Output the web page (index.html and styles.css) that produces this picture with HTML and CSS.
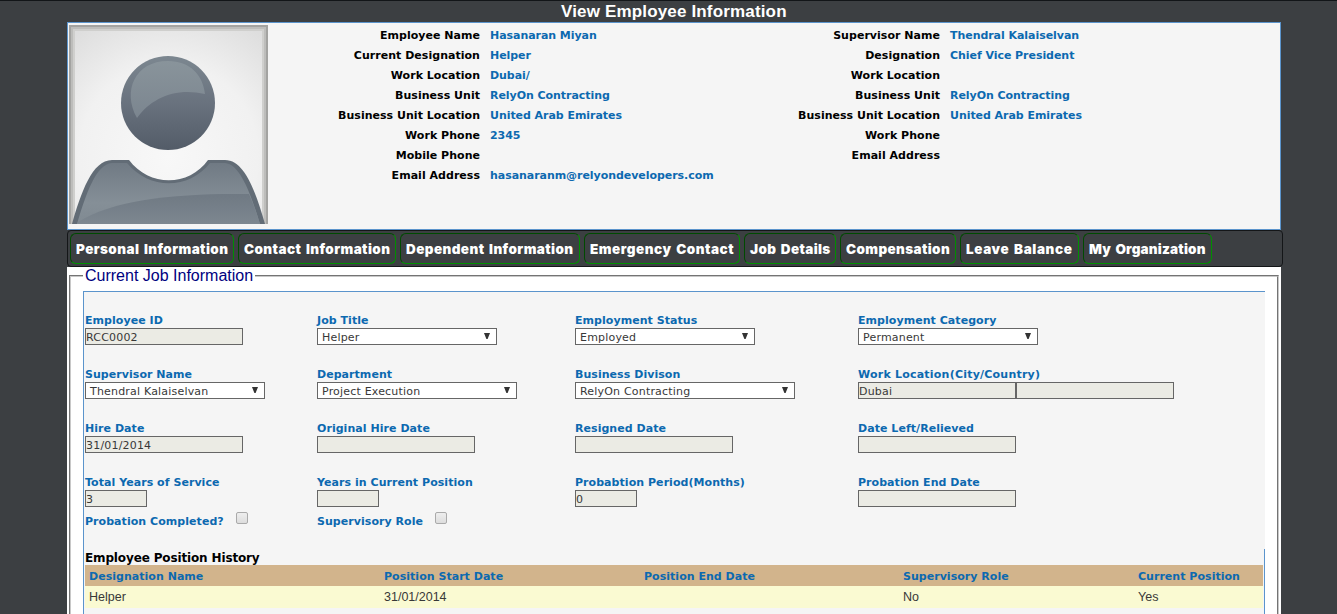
FILE: index.html
```html
<!DOCTYPE html>
<html lang="en">
<head>
<meta charset="utf-8">
<title>View Employee Information</title>
<link rel="stylesheet" href="styles.css">
</head>
<body>
<div class="page">
  <h1 class="title"><span>View Employee Information</span></h1>
  <section class="summary">
    <svg class="avatar" viewBox="0 0 199 199" width="199" height="199">
      <defs>
        <radialGradient id="bg" cx=".5" cy=".65" r=".8"><stop offset="0" stop-color="#f8f8f8"/><stop offset=".6" stop-color="#f1f1f1"/><stop offset="1" stop-color="#dedede"/></radialGradient>
        <linearGradient id="head" x1="0" y1="0" x2="0" y2="1"><stop offset="0" stop-color="#7c8790"/><stop offset=".5" stop-color="#69727e"/><stop offset="1" stop-color="#535c68"/></linearGradient>
        <linearGradient id="shine" x1="0" y1="0" x2="0" y2="1"><stop offset="0" stop-color="#89949b"/><stop offset="1" stop-color="#7b858f"/></linearGradient>
        <linearGradient id="body" x1="0" y1="0" x2="0" y2="1"><stop offset="0" stop-color="#707a84"/><stop offset=".65" stop-color="#858f97"/><stop offset="1" stop-color="#808a92"/></linearGradient>
        <linearGradient id="fold" x1="0" y1="0" x2="0" y2="1"><stop offset="0" stop-color="#6f7983"/><stop offset="1" stop-color="#7d8790"/></linearGradient>
      </defs>
      <rect width="199" height="199" fill="#a3a3a1"/>
      <rect x="2" y="2" width="195" height="197" fill="#bdbdbb"/>
      <rect x="4" y="4" width="191" height="195" fill="#cfcfcd"/>
      <rect x="6" y="6" width="187" height="193" fill="url(#bg)"/>
      <circle cx="99" cy="78" r="47" fill="url(#head)"/>
      <path d="M68 93C53 66 66 36 99 36C121 36 134 50 136 69C107 62 82 73 68 93Z" fill="url(#shine)"/>
      <path d="M3 199C12 168 23 135 43 135H60C80 162 120 162 139 135H156C176 135 187 168 196 199Z" fill="#626c76"/>
      <path d="M8 199C17 169 27 139 43 138H58C80 165 120 165 141 138H156C171 139 182 169 191 199Z" fill="url(#body)"/>
      <path d="M9 197C45 174 110 168 180 169C184 178 188 189 191 199H8Z" fill="url(#fold)"/>
    </svg>
    <dl class="facts employee">
      <dt>Employee Name</dt><dd>Hasanaran Miyan</dd>
      <dt>Current Designation</dt><dd>Helper</dd>
      <dt>Work Location</dt><dd>Dubai/</dd>
      <dt>Business Unit</dt><dd>RelyOn Contracting</dd>
      <dt>Business Unit Location</dt><dd>United Arab Emirates</dd>
      <dt>Work Phone</dt><dd>2345</dd>
      <dt>Mobile Phone</dt><dd></dd>
      <dt>Email Address</dt><dd>hasanaranm@relyondevelopers.com</dd>
    </dl>
    <dl class="facts">
      <dt>Supervisor Name</dt><dd>Thendral Kalaiselvan</dd>
      <dt>Designation</dt><dd>Chief Vice President</dd>
      <dt>Work Location</dt><dd></dd>
      <dt>Business Unit</dt><dd>RelyOn Contracting</dd>
      <dt>Business Unit Location</dt><dd>United Arab Emirates</dd>
      <dt>Work Phone</dt><dd></dd>
      <dt>Email Address</dt><dd></dd>
    </dl>
  </section>
  <nav class="tabs">
    <a>Personal Information</a><a>Contact Information</a><a>Dependent Information</a><a>Emergency Contact</a><a>Job Details</a><a>Compensation</a><a>Leave Balance</a><a>My Organization</a>
  </nav>
  <main class="content">
    <fieldset class="job">
      <legend>Current Job Information</legend>
      <div class="panel">
        <div class="form">
          <div class="field"><label>Employee ID</label><div class="input">RCC0002</div></div>
          <div class="field"><label>Job Title</label><div class="select">Helper<i class="arrow"></i></div></div>
          <div class="field"><label>Employment Status</label><div class="select">Employed<i class="arrow"></i></div></div>
          <div class="field"><label>Employment Category</label><div class="select">Permanent<i class="arrow"></i></div></div>

          <div class="field"><label>Supervisor Name</label><div class="select">Thendral Kalaiselvan<i class="arrow"></i></div></div>
          <div class="field"><label>Department</label><div class="select medium">Project Execution<i class="arrow"></i></div></div>
          <div class="field"><label>Business Divison</label><div class="select wide">RelyOn Contracting<i class="arrow"></i></div></div>
          <div class="field"><label class="spaced">Work Location(City/Country)</label><div class="pair"><div class="input">Dubai</div><div class="input"></div></div></div>

          <div class="field"><label>Hire Date</label><div class="input">31/01/2014</div></div>
          <div class="field"><label>Original Hire Date</label><div class="input"></div></div>
          <div class="field"><label>Resigned Date</label><div class="input"></div></div>
          <div class="field"><label>Date Left/Relieved</label><div class="input"></div></div>

          <div class="field"><label>Total Years of Service</label><div class="input short">3</div></div>
          <div class="field"><label>Years in Current Position</label><div class="input short"></div></div>
          <div class="field"><label>Probabtion Period(Months)</label><div class="input short">0</div></div>
          <div class="field"><label>Probation End Date</label><div class="input"></div></div>
        </div>
        <div class="checks">
          <div class="check"><label>Probation Completed?</label><i class="box"></i></div>
          <div class="check"><label>Supervisory Role</label><i class="box"></i></div>
        </div>
        <div class="history">
          <h2>Employee Position History</h2>
          <div class="row head"><span>Designation Name</span><span>Position Start Date</span><span>Position End Date</span><span>Supervisory Role</span><span>Current Position</span></div>
          <div class="row"><span>Helper</span><span>31/01/2014</span><span></span><span>No</span><span>Yes</span></div>
        </div>
      </div>
    </fieldset>
  </main>
</div>
</body>
</html>
```
FILE: styles.css
```css
* { box-sizing: border-box; }
body { margin: 0; height: 614px; overflow: hidden; background: #3c3f42; border-top: 1px solid #121518; font: bold 11px/15px "DejaVu Sans", sans-serif; color: #000; }
.page { display: flex; flex-direction: column; width: 1214px; height: 613px; margin-left: 67px; }
.title { flex: none; margin: 0; height: 21px; padding-left: 494px; font: bold 17px/21px "Liberation Sans", sans-serif; letter-spacing: .16px; color: #fff; white-space: nowrap; }
.summary { display: flex; flex: none; height: 208px; border: 1px solid #5b94cc; background: #f5f5f5; padding: 2px 0 0 1px; }
.avatar { display: block; flex: none; }
.facts { display: grid; grid-template-columns: 212px 1fr; grid-auto-rows: 20px; column-gap: 10px; width: 460px; margin: 0; line-height: 22px; white-space: nowrap; }
.facts dt { text-align: right; letter-spacing: .03px; }
.facts dd { margin: 0; color: #0c69b0; letter-spacing: -.05px; }
.tabs { display: flex; flex: none; gap: 4px; width: 1216px; height: 37px; border: 1px solid #141618; border-radius: 4px; background: #3c3f42; padding: 2px; }
.tabs a { height: 31px; padding: 0 5px; border: 1px solid; border-color: #004b00 #009000 #009000 #004b00; border-radius: 6px; font: 900 13.5px/30px Inter, sans-serif; letter-spacing: .42px; word-spacing: 1.5px; color: #fff; white-space: nowrap; }
.tabs a:nth-child(1) { width: 164px; }
.tabs a:nth-child(2) { width: 158px; }
.tabs a:nth-child(3) { width: 180px; }
.tabs a:nth-child(4) { width: 156px; letter-spacing: .52px; }
.tabs a:nth-child(5) { width: 92px; letter-spacing: .35px; }
.tabs a:nth-child(6) { width: 116px; letter-spacing: .38px; }
.tabs a:nth-child(7) { width: 119px; letter-spacing: .6px; }
.tabs a:nth-child(8) { width: 129px; letter-spacing: .18px; }
.content { flex: 1; min-height: 0; background: #fff; padding: 0 2px; overflow: hidden; }
.job { margin: 0; height: 400px; padding: 0 12px; border: 2px groove #c8c8c8; min-width: 0; }
.job legend { height: 18px; padding: 0 2px; font: 16px/18px "Liberation Sans", sans-serif; color: #000080; }
.panel { width: 1182px; height: 400px; margin-top: 6px; border-left: 1px solid #5b94cc; border-top: 1px solid #5b94cc; background: #f5f5f5; }
.form { display: grid; grid-template-columns: 232px 258px 283px 1fr; grid-auto-rows: 32px; row-gap: 22px; padding: 21px 0 0 1px; color: #0c69b0; }
.field label { display: block; height: 15px; white-space: nowrap; letter-spacing: .05px; }
.field .spaced { letter-spacing: .22px; }
.input, .select { width: 158px; height: 17px; border: 1px solid #666; background: #ebebe4; color: #383838; font-weight: normal; line-height: 17px; letter-spacing: .19px; white-space: nowrap; }
.select { display: flex; justify-content: space-between; width: 180px; padding: 0 6px 0 4px; background: #fff; }
.medium { width: 200px; }
.wide { width: 220px; }
.short { width: 62px; }
.pair { display: flex; }
.arrow { width: 6px; height: 6px; margin-top: 4px; background: #333; clip-path: polygon(0 0, 100% 0, 60% 100%, 40% 100%); }
.checks { display: flex; height: 42px; padding: 5px 0 0 1px; color: #0c69b0; letter-spacing: .05px; }
.check { display: flex; width: 232px; gap: 12px; }
.check label { padding-top: 2px; }
.box { width: 12px; height: 12px; border: 1px solid #aaa; border-radius: 2px; background: linear-gradient(#eee, #ddd); }
.history { border-right: 1px solid #5b94cc; padding: 0 1px; height: 100px; }
.history h2 { margin: 0; height: 16px; font: bold 12px/18px "DejaVu Sans", sans-serif; letter-spacing: -.14px; }
.row { display: grid; grid-template-columns: 295px 260px 259px 235px 1fr; height: 22px; padding-left: 4px; background: #fafad2; color: #383838; font: 12.5px/22px "Liberation Sans", sans-serif; }
.row.head { height: 21px; background: #d2b48c; color: #0c69b0; font: bold 11px/23px "DejaVu Sans", sans-serif; letter-spacing: .03px; }
```
